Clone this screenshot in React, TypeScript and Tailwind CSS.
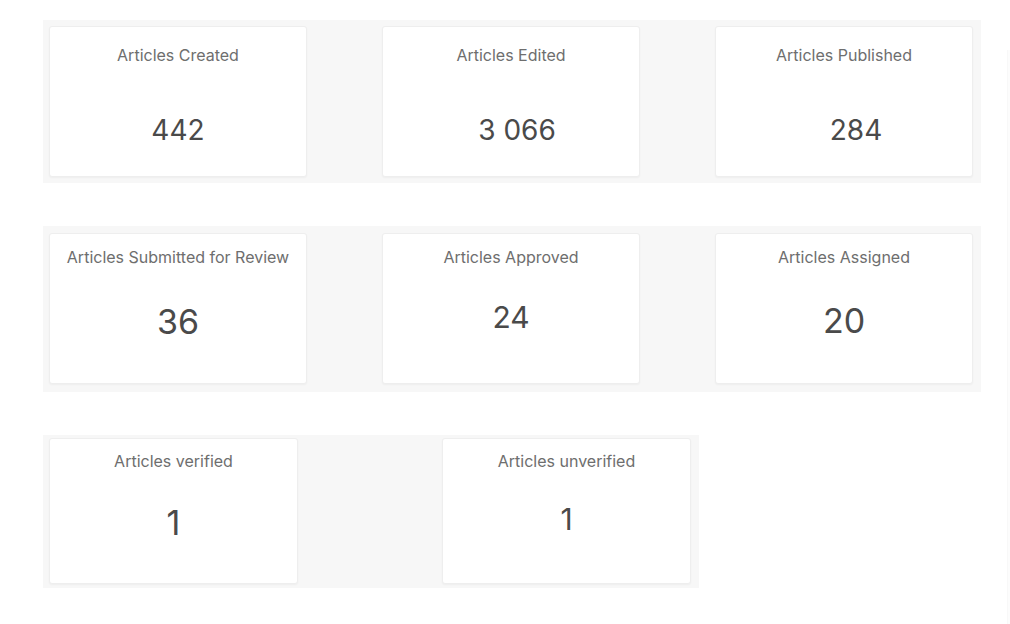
import React from "react";

type Card = {
  title: string;
  value: string;
  pt: string;
  mt: string;
  size: string;
  extra?: string;
};

function StatCard({ c, h, w }: { c: Card; h: string; w: string }) {
  return (
    <div
      className={`${w} ${h} ${c.pt} flex flex-col items-center bg-white rounded-[3px] border border-[#eeeeee] shadow-[0_1px_2px_rgba(0,0,0,0.04)]`}
    >
      <div className="text-[16px] leading-[20px] text-[#6e6e6e] whitespace-nowrap">{c.title}</div>
      <div className={`${c.mt} ${c.size} leading-none text-[#4a4a4a] whitespace-nowrap ${c.extra ?? ""}`}>
        {c.value}
      </div>
    </div>
  );
}

export default function App() {
  const row1: Card[] = [
    { title: "Articles Created", value: "442", pt: "pt-[18px]", mt: "mt-[51px]", size: "text-[28px]" },
    { title: "Articles Edited", value: "3 066", pt: "pt-[18px]", mt: "mt-[51px]", size: "text-[28px]", extra: "pl-[12px]" },
    { title: "Articles Published", value: "284", pt: "pt-[18px]", mt: "mt-[51px]", size: "text-[28px]", extra: "pl-[24px]" },
  ];
  const row2: Card[] = [
    { title: "Articles Submitted for Review", value: "36", pt: "pt-[13px]", mt: "mt-[38px]", size: "text-[34px]" },
    { title: "Articles Approved", value: "24", pt: "pt-[13px]", mt: "mt-[35px]", size: "text-[30px]" },
    { title: "Articles Assigned", value: "20", pt: "pt-[13px]", mt: "mt-[37px]", size: "text-[34px]" },
  ];
  const row3: Card[] = [
    { title: "Articles verified", value: "1", pt: "pt-[12px]", mt: "mt-[35px]", size: "text-[34px]" },
    { title: "Articles unverified", value: "1", pt: "pt-[12px]", mt: "mt-[33px]", size: "text-[30px]" },
  ];

  return (
    <div
      className="relative min-h-[624px] w-[1010px] bg-white pt-[20px] pl-[43px] overflow-hidden"
      style={{ fontFamily: "Inter, 'Liberation Sans', sans-serif" }}
    >
      <div className="w-[938px] bg-[#f7f7f7] flex justify-between pl-[6px] pr-[8px] pt-[6px] pb-[6px]">
        {row1.map((c) => (
          <StatCard key={c.title} c={c} h="h-[151px]" w="w-[258px]" />
        ))}
      </div>

      <div className="mt-[43px] w-[938px] bg-[#f7f7f7] flex justify-between pl-[6px] pr-[8px] pt-[7px] pb-[8px]">
        {row2.map((c) => (
          <StatCard key={c.title} c={c} h="h-[151px]" w="w-[258px]" />
        ))}
      </div>

      <div className="mt-[43px] w-[656px] bg-[#f7f7f7] flex justify-between pl-[6px] pr-[8px] pt-[3px] pb-[4px]">
        {row3.map((c) => (
          <StatCard key={c.title} c={c} h="h-[146px]" w="w-[249px]" />
        ))}
      </div>

      <div className="absolute left-[1007px] top-[50px] bottom-0 w-[3px] bg-[#fcfcfc] border-l border-[#f8f8f8]" />
    </div>
  );
}
